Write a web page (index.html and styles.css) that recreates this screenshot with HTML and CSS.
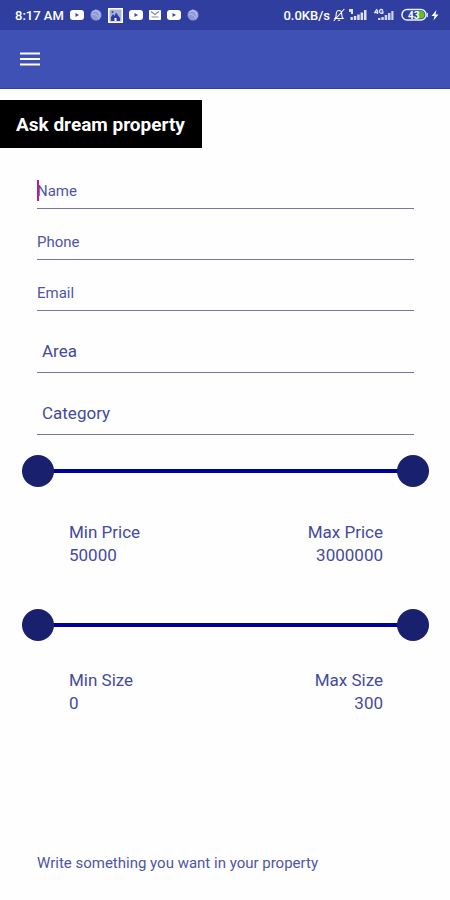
FILE: index.html
```html
<!DOCTYPE html>
<html lang="en">
<head>
<meta charset="utf-8">
<meta name="viewport" content="width=device-width, initial-scale=1">
<title>Ask dream property</title>
<link rel="stylesheet" href="styles.css">
</head>
<body>
<svg class="defs" aria-hidden="true">
  <symbol id="video" viewBox="0 0 14 12"><rect y="1" width="14" height="10" rx="3" fill="#fff"/><path d="M5.500 4v4L9 6z" fill="#3949ab"/></symbol>
  <symbol id="ball" viewBox="0 0 12 12"><circle cx="6" cy="6" r="5.500" fill="#8e9ad8"/><path d="M2 3.500c3-3 7-1.500 8 1.500M1.500 6c3-2 6 0 7.500 4M5 1c3 1 5 4 5 7" fill="none" stroke="#b9c1ec"/></symbol>
</svg>
<div class="status">
  <div class="status-group">
    <span class="clock">8:17 AM</span>
    <svg width="14" height="12"><use href="#video"/></svg>
    <svg width="12" height="12"><use href="#ball"/></svg>
    <svg width="15" height="15" viewBox="0 0 15 15"><rect x=".75" y=".75" width="13.500" height="13.500" fill="#a9b3e2" stroke="#fff" stroke-width="1.500"/><path d="M3 13V9l2-3 1.500 2L8 4.500 12 10v3z" fill="#303f9f"/><path d="M6.500 13v-3h2v3z" fill="#fff"/><circle cx="4.500" cy="4" r="1" fill="#303f9f"/></svg>
    <svg width="14" height="12"><use href="#video"/></svg>
    <svg width="12" height="12" viewBox="0 0 12 12"><rect y="1" width="12" height="10" rx="1" fill="#fff"/><path d="M2 2.500 6 5.500l4-3M2.500 8h7" fill="none" stroke="#7a86c8" stroke-width="1.200"/></svg>
    <svg width="14" height="12"><use href="#video"/></svg>
    <svg width="12" height="12"><use href="#ball"/></svg>
  </div>
  <div class="status-group status-right">
    <span class="speed">0.0KB/s</span>
    <svg width="12" height="14" viewBox="0 0 12 14"><path d="M2 10.500c1-1 1.200-2 1.200-4C3.200 4 4.300 2.500 6 2.500S8.800 4 8.800 6.500c0 2 .2 3 1.200 4zM4.800 12.200h2.400M11.300 1 .7 13" fill="none" stroke="#fff" stroke-width="1.100"/></svg>
    <svg class="signal" width="19" height="14" viewBox="0 0 19 14"><path d="M1 1h4v5H3V4H1zM2.500 9h2.300v3H2.500zM5.800 8h2.500v4H5.800zM9.200 6.500h2.500V12H9.200zM12.600 4.500h2.500V12h-2.500zM16 2h2.500v10H16z" fill="#dfe3f7"/></svg>
    <svg class="signal" width="20" height="14" viewBox="0 0 20 14"><path d="M3 1 .8 4.500h3.500M3.500 2v4M9 2.500C7 .5 5.500 2 5.500 3.500S7.500 6 9 5V3.800H7.500" fill="none" stroke="#dfe3f7" stroke-width="1.300"/><path d="M4 10h2.500v2H4zM7.300 9h2.500v3H7.300zM10.700 7h2.500v5h-2.500zM14 5h2.500v7H14zM17.300 3h2.200v9h-2.200z" fill="#cdd3f2"/></svg>
    <svg width="27" height="14" viewBox="0 0 27 14"><rect x="1" y="1.500" width="24" height="10.500" rx="5" fill="#303f9f" stroke="#eef" stroke-width="1.500"/><path d="M16 3h4.500c4 0 4 7.500 0 7.500H16z" fill="#55c526"/><path d="M26.300 5v4" stroke="#fff"/><text x="7" y="10.500" font-size="10" font-weight="700" fill="#fff">43</text></svg>
    <svg width="8" height="12" viewBox="0 0 8 12"><path d="M5.500 1 .5 7h3l-1 4.500 5-6h-3z" fill="#fff"/></svg>
  </div>
</div>
<header class="appbar">
  <button class="menu" type="button" aria-label="Menu"><svg width="20" height="16" viewBox="0 0 20 16"><path d="M0 2.500h20M0 8h20M0 13.500h20" stroke="#fff" stroke-width="2"/></svg></button>
</header>
<main>
  <h1>Ask dream property</h1>
  <form>
    <div class="fields">
      <div class="field focused"><input type="text" aria-label="Name" placeholder="Name"></div>
      <div class="field"><input type="tel" aria-label="Phone" placeholder="Phone"></div>
      <div class="field"><input type="email" aria-label="Email" placeholder="Email"></div>
      <div class="pick"><select aria-label="Area"><option>Area</option></select></div>
      <div class="pick"><select aria-label="Category"><option>Category</option></select></div>
    </div>
    <div class="range">
      <input id="min-price" type="range" min="50000" max="3000000" value="50000">
      <input id="max-price" type="range" min="50000" max="3000000" value="3000000">
    </div>
    <div class="limits">
      <div><label for="min-price">Min Price</label><output for="min-price">50000</output></div>
      <div class="max"><label for="max-price">Max Price</label><output for="max-price">3000000</output></div>
    </div>
    <div class="range size">
      <input id="min-size" type="range" min="0" max="300" value="0">
      <input id="max-size" type="range" min="0" max="300" value="300">
    </div>
    <div class="limits size-limits">
      <div><label for="min-size">Min Size</label><output for="min-size">0</output></div>
      <div class="max"><label for="max-size">Max Size</label><output for="max-size">300</output></div>
    </div>
    <textarea rows="1" aria-label="Wishes" placeholder="Write something you want in your property"></textarea>
  </form>
</main>
</body>
</html>
```
FILE: styles.css
```css
* { box-sizing: border-box; }
body {
  margin: 0;
  background: #fefefe;
  color: #444b9c;
  font-family: Roboto, sans-serif;
  font-size: 17px;
}
.defs { position: absolute; width: 0; height: 0; }
.status {
  display: flex;
  justify-content: space-between;
  height: 30px;
  padding: 0 11px 0 15px;
  background: #303f9f;
  color: #fff;
  font-size: 13px;
  font-weight: 500;
}
.status-group { display: flex; align-items: center; gap: 6px; }
.status-right { gap: 3px; }
.signal { margin-right: 4px; }
.appbar {
  display: flex;
  align-items: center;
  height: 59px;
  padding: 0 20px;
  background: #3f51b5;
  border-bottom: 1px solid #303f9f;
}
.menu { display: flex; padding: 0; border: 0; background: none; }
h1 {
  width: fit-content;
  margin: 11px 0 0;
  padding: 1px 17px 0 16px;
  background: #000;
  color: #fff;
  font-size: 19px;
  font-weight: 700;
  line-height: 47px;
}
.fields { padding: 10px 36px 0 37px; }
.field { position: relative; padding-top: 15px; }
.pick { padding-top: 18px; }
input, select, textarea { font-family: inherit; color: inherit; }
.field input, select {
  display: block;
  width: 100%;
  border: 0;
  border-bottom: 1px solid #77779c;
  border-radius: 0;
  background: none;
  outline: none;
}
.field input { height: 36px; padding: 0; font-size: 15px; }
select { height: 44px; padding: 0 5px; font-size: 17px; appearance: none; }
::placeholder { color: #4f55a3; opacity: 1; }
.focused::before {
  content: "";
  position: absolute;
  left: 0;
  bottom: 8px;
  width: 2px;
  height: 21px;
  background: #c2188b;
}
.range {
  display: grid;
  margin: 20px 21px 0 22px;
  background: linear-gradient(#00009c, #00009c) center / calc(100% - 32px) 4px no-repeat;
}
.range input {
  grid-area: 1 / 1;
  appearance: none;
  width: 100%;
  height: 32px;
  margin: 0;
  background: none;
  pointer-events: none;
}
.range input::-webkit-slider-thumb {
  appearance: none;
  width: 32px;
  height: 32px;
  border-radius: 50%;
  background: #19206e;
  pointer-events: auto;
}
.limits {
  display: flex;
  justify-content: space-between;
  padding: 34px 67px 0 69px;
  line-height: 23px;
}
.limits label, .limits output { display: block; }
.max { text-align: right; }
.size { margin-top: 42px; }
.size-limits { padding-top: 28px; }
textarea {
  display: block;
  width: calc(100% - 73px);
  height: 46px;
  margin: 125px 36px 0 37px;
  padding: 12px 0;
  border: 0;
  background: none;
  font-size: 15px;
  line-height: 22px;
  resize: none;
  outline: none;
}
```
